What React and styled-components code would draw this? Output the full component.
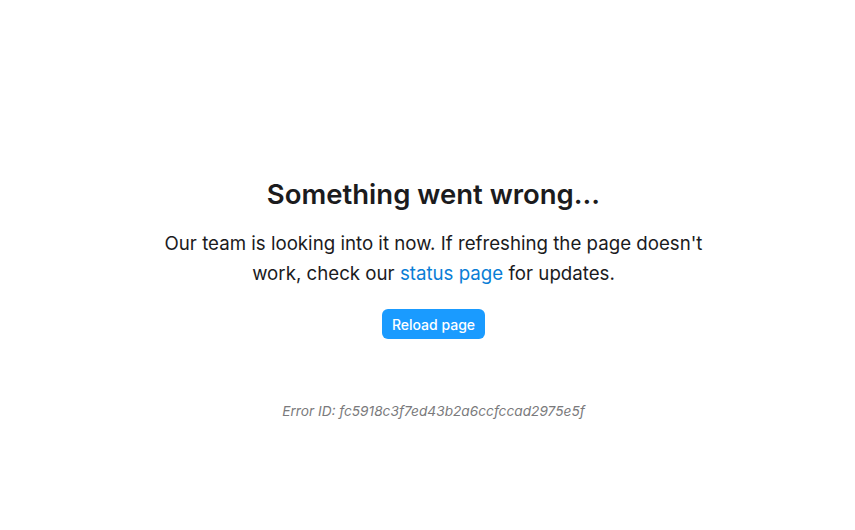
import React from "react";
import styled, { createGlobalStyle } from "styled-components";

const Global = createGlobalStyle`
  html, body { margin: 0; padding: 0; background: #ffffff; }
  body { font-family: Inter, "Noto Sans", sans-serif; -webkit-font-smoothing: antialiased; }
`;

const Page = styled.main`
  box-sizing: border-box;
  width: 855px;
  height: 530px;
  padding: 177px 0 0 12px;
  display: flex;
  flex-direction: column;
  align-items: center;
  text-align: center;
`;

const Title = styled.h1`
  margin: 0;
  font-size: 27.5px;
  line-height: 34px;
  font-weight: 600;
  color: #1b1b1d;
`;

const Message = styled.p`
  margin: 18px 0 0;
  max-width: 580px;
  font-size: 18.7px;
  line-height: 30px;
  font-weight: 400;
  color: #1b1b1d;
`;

const Link = styled.a`
  color: #0a7ed6;
  text-decoration: none;
`;

const Button = styled.button`
  margin-top: 20px;
  height: 30px;
  padding: 0 10px;
  border: none;
  border-radius: 6px;
  background: #1a9bff;
  color: #ffffff;
  font-family: inherit;
  font-size: 14px;
  font-weight: 500;
  cursor: pointer;
`;

const ErrorId = styled.p`
  margin: 62px 0 0;
  font-size: 13.7px;
  line-height: 20px;
  font-style: italic;
  color: #7a7a7c;
`;

export default function App() {
  return (
    <>
      <Global />
      <Page>
        <Title>Something went wrong...</Title>
        <Message>
          Our team is looking into it now. If refreshing the page doesn't
          <br />
          work, check our <Link href="#">status page</Link> for updates.
        </Message>
        <Button>Reload page</Button>
        <ErrorId>Error ID: fc5918c3f7ed43b2a6ccfccad2975e5f</ErrorId>
      </Page>
    </>
  );
}
